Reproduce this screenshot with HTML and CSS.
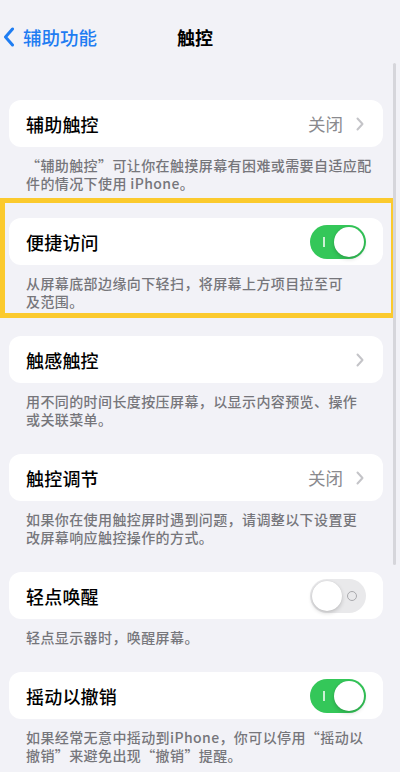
FILE: index.html
```html
<!DOCTYPE html>
<html lang="zh-CN">
<head>
<meta charset="utf-8">
<title>触控</title>
<link rel="stylesheet" href="styles.css">
</head>
<body>
<div class="screen">
  <header class="nav">
    <a class="back">
      <svg class="back-icon" width="12" height="20" viewBox="0 0 12 20"><path d="M9.5 2 L2.5 10 L9.5 18" fill="none" stroke="#1f7df2" stroke-width="3" stroke-linecap="round" stroke-linejoin="round"/></svg>
      <span>辅助功能</span>
    </a>
    <h1 class="title">触控</h1>
    <span></span>
  </header>

  <main class="list">
    <section class="group">
      <div class="card">
        <span class="label">辅助触控</span>
        <span class="value">关闭</span>
        <svg class="chev" width="8" height="14" viewBox="0 0 8 14"><path d="M1.5 1.5 L6.5 7 L1.5 12.5" fill="none" stroke="#c4c4c8" stroke-width="2" stroke-linecap="round" stroke-linejoin="round"/></svg>
      </div>
      <p class="note">“辅助触控”可让你在触摸屏幕有困难或需要自适应配<br>件的情况下使用 iPhone。</p>
    </section>

    <section class="group highlighted">
      <div class="card">
        <span class="label">便捷访问</span>
        <span class="switch on"><span class="mark"></span><span class="knob"></span></span>
      </div>
      <p class="note">从屏幕底部边缘向下轻扫，将屏幕上方项目拉至可<br>及范围。</p>
      <div class="highlight"></div>
    </section>

    <section class="group">
      <div class="card">
        <span class="label">触感触控</span>
        <span class="value"></span>
        <svg class="chev" width="8" height="14" viewBox="0 0 8 14"><path d="M1.5 1.5 L6.5 7 L1.5 12.5" fill="none" stroke="#c4c4c8" stroke-width="2" stroke-linecap="round" stroke-linejoin="round"/></svg>
      </div>
      <p class="note">用不同的时间长度按压屏幕，以显示内容预览、操作<br>或关联菜单。</p>
    </section>

    <section class="group">
      <div class="card">
        <span class="label">触控调节</span>
        <span class="value">关闭</span>
        <svg class="chev" width="8" height="14" viewBox="0 0 8 14"><path d="M1.5 1.5 L6.5 7 L1.5 12.5" fill="none" stroke="#c4c4c8" stroke-width="2" stroke-linecap="round" stroke-linejoin="round"/></svg>
      </div>
      <p class="note">如果你在使用触控屏时遇到问题，请调整以下设置更<br>改屏幕响应触控操作的方式。</p>
    </section>

    <section class="group">
      <div class="card">
        <span class="label">轻点唤醒</span>
        <span class="switch off"><span class="knob"></span><span class="ring"></span></span>
      </div>
      <p class="note">轻点显示器时，唤醒屏幕。</p>
    </section>

    <section class="group">
      <div class="card">
        <span class="label">摇动以撤销</span>
        <span class="switch on"><span class="mark"></span><span class="knob"></span></span>
      </div>
      <p class="note">如果经常无意中摇动到iPhone，你可以停用“摇动以<br>撤销”来避免出现“撤销”提醒。</p>
    </section>
  </main>
  <div class="scrollbar"></div>
</div>
</body>
</html>
```

FILE: styles.css
```css
* { box-sizing: border-box; }

html, body {
  margin: 0;
  padding: 0;
  background: #f2f2f7;
}

body {
  font-family: "Noto Sans CJK SC", "Noto Sans", sans-serif;
  color: #000;
  overflow: hidden;
}

.screen {
  position: relative;
  width: 400px;
  height: 772px;
  overflow: hidden;
}

.nav {
  display: grid;
  grid-template-columns: 1fr auto 1fr;
  align-items: center;
  height: 22px;
  margin-top: 26px;
  padding-right: 10px;
}

.back {
  display: flex;
  align-items: center;
  gap: 8px;
  padding-left: 3px;
  color: #1f7df2;
  font-size: 18.5px;
  font-weight: 500;
  line-height: 22px;
  white-space: nowrap;
}

.back-icon { display: block; }

.title {
  margin: 0;
  font-size: 18px;
  font-weight: 600;
  line-height: 22px;
}

.list {
  margin-top: 52px;
}

.group {
  position: relative;
  margin-bottom: 26px;
}

.card {
  display: flex;
  align-items: center;
  height: 47px;
  margin: 0 17px 0 9px;
  padding: 0 17px 0 17px;
  background: #fff;
  border-radius: 12px;
}

.label {
  flex: 1;
  font-size: 18px;
  font-weight: 500;
  line-height: 24px;
  letter-spacing: 0.2px;
}

.value {
  font-size: 17.5px;
  color: #8a8a8e;
  line-height: 24px;
  margin-right: 13px;
}

.chev {
  display: block;
  margin-right: 2px;
}

.note {
  margin: 0;
  padding: 9px 12px 0 26px;
  font-size: 14px;
  font-weight: 500;
  letter-spacing: 0.4px;
  line-height: 18px;
  color: #76767b;
}

.switch {
  position: relative;
  display: block;
  width: 56px;
  height: 34px;
  border-radius: 17px;
}

.switch.on { background: #34c759; }
.switch.off { background: #e9e9eb; }

.switch .knob {
  position: absolute;
  top: 2px;
  width: 30px;
  height: 30px;
  border-radius: 50%;
  background: #fff;
  box-shadow: 0 2px 4px rgba(0, 0, 0, 0.18), 0 0 1px rgba(0, 0, 0, 0.12);
}

.switch.on .knob { right: 2px; }
.switch.off .knob { left: 2px; }

.switch .mark {
  position: absolute;
  left: 13px;
  top: 12px;
  width: 1.5px;
  height: 10px;
  background: rgba(255, 255, 255, 0.75);
}

.switch .ring {
  position: absolute;
  right: 9px;
  top: 12px;
  width: 10px;
  height: 10px;
  border: 1.5px solid #a9a9ad;
  border-radius: 50%;
}

.highlight {
  position: absolute;
  top: -20px;
  left: 0;
  right: 4px;
  bottom: -8px;
  border: 5px solid #fbca2e;
  pointer-events: none;
}

.scrollbar {
  position: absolute;
  top: 63px;
  right: 4px;
  width: 3px;
  height: 502px;
  border-radius: 2px;
  background: #d6d6db;
}
```
